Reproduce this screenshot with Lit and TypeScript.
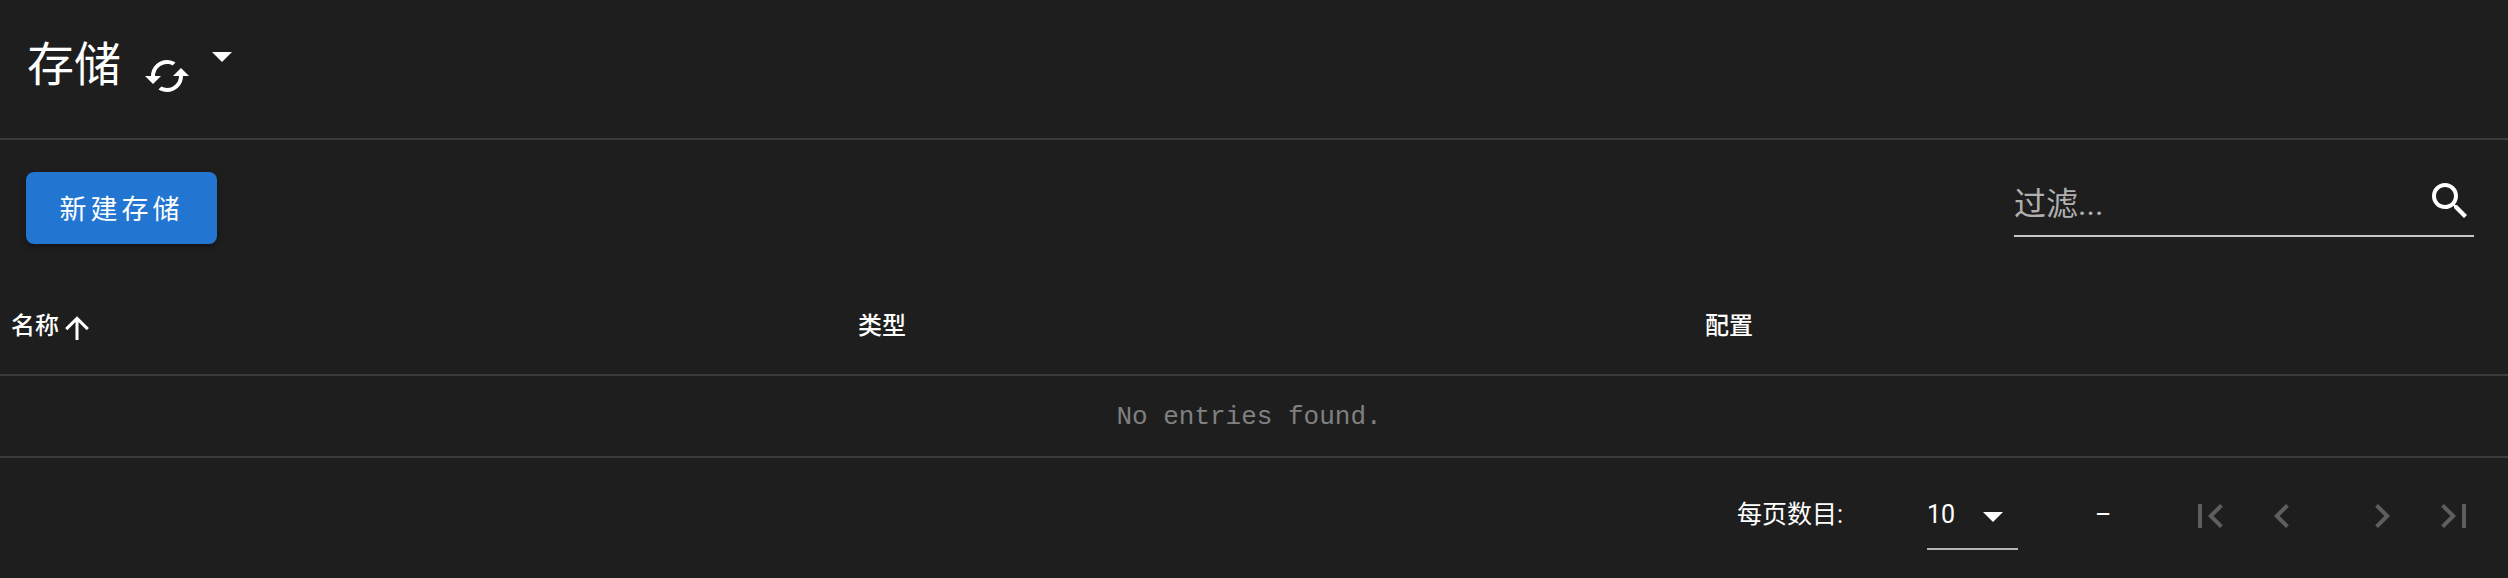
import { LitElement, html, css, svg } from 'lit';
import { customElement } from 'lit/decorators.js';

const SYNC =
  'M12,18A6,6 0 0,1 6,12C6,11 6.25,10.03 6.7,9.2L5.24,7.74C4.46,8.97 4,10.43 4,12A8,8 0 0,0 12,20V23L16,19L12,15M12,4V1L8,5L12,9V6A6,6 0 0,1 18,12C18,13 17.75,13.97 17.3,14.8L18.76,16.26C19.54,15.03 20,13.57 20,12A8,8 0 0,0 12,4Z';
const SEARCH =
  'M9.5,3A6.5,6.5 0 0,1 16,9.5C16,11.11 15.41,12.59 14.44,13.73L14.71,14H15.5L20.5,19L19,20.5L14,15.5V14.71L13.73,14.44C12.59,15.41 11.11,16 9.5,16A6.5,6.5 0 0,1 3,9.5A6.5,6.5 0 0,1 9.5,3M9.5,5C7,5 5,7 5,9.5C5,12 7,14 9.5,14C12,14 14,12 14,9.5C14,7 12,5 9.5,5Z';
const ARROW_UP = 'M13,20H11V8L5.5,13.5L4.08,12.08L12,4.16L19.92,12.08L18.5,13.5L13,8V20Z';
const FIRST = 'M18.41,16.59L13.82,12L18.41,7.41L17,6L11,12L17,18L18.41,16.59M6,6H8V18H6V6Z';
const PREV = 'M15.41,16.58L10.83,12L15.41,7.41L14,6L8,12L14,18L15.41,16.58Z';
const NEXT = 'M8.59,16.58L13.17,12L8.59,7.41L10,6L16,12L10,18L8.59,16.58Z';
const LAST = 'M5.59,7.41L10.18,12L5.59,16.59L7,18L13,12L7,6L5.59,7.41M16,6H18V18H16V6Z';
const CARET = 'M7,10L12,15L17,10H7Z';

const icon = (d: string, cls = '') =>
  html`<svg class="icon ${cls}" viewBox="0 0 24 24">${svg`<path d=${d}></path>`}</svg>`;

@customElement('app-root')
export class AppRoot extends LitElement {
  render() {
    return html`
      <header class="title-bar">
        <h1 class="title">存储</h1>
        ${icon(SYNC, 'sync')} ${icon(CARET, 'title-caret')}
      </header>

      <section class="toolbar">
        <button class="primary">新建存储</button>
        <label class="filter">
          <span class="filter__text">过滤...</span>
          ${icon(SEARCH, 'search')}
        </label>
      </section>

      <div class="row head">
        <div class="cell">名称 ${icon(ARROW_UP, 'sort')}</div>
        <div class="cell">类型</div>
        <div class="cell">配置</div>
      </div>
      <div class="empty">No entries found.</div>

      <footer class="pager">
        <span class="pager__label">每页数目:</span>
        <div class="pager__select">
          <span>10</span>
          ${icon(CARET, 'pager-caret')}
        </div>
        <span class="pager__range">–</span>
        <div class="pager__nav">
          ${icon(FIRST, 'nav')} ${icon(PREV, 'nav')} ${icon(NEXT, 'nav gap')} ${icon(LAST, 'nav')}
        </div>
      </footer>
    `;
  }

  static styles = css`
    :host {
      display: block;
      width: 2508px;
      height: 578px;
      overflow: hidden;
      background: #1e1e1e;
      color: #fff;
      font-family: Roboto, 'Noto Sans CJK SC', sans-serif;
    }

    .icon {
      display: block;
      fill: currentColor;
      flex: none;
    }

    .title-bar {
      box-sizing: border-box;
      height: 140px;
      border-bottom: 2px solid #3b3b3b;
      display: flex;
      align-items: flex-start;
      padding-left: 27px;
    }

    .title {
      width: 96px;
      margin: 33px 0 0;
      font-size: 47px;
      font-weight: 400;
      line-height: 64px;
    }

    .sync {
      width: 48px;
      height: 48px;
      margin: 52px 0 0 20px;
      transform: rotate(90deg);
    }

    .title-caret {
      width: 48px;
      height: 48px;
      margin: 32px 0 0 7px;
    }

    .toolbar {
      box-sizing: border-box;
      height: 136px;
      padding: 32px 34px 0 26px;
      display: flex;
      justify-content: space-between;
      align-items: flex-start;
    }

    .primary {
      width: 191px;
      height: 72px;
      padding: 0 0 2px;
      border: 0;
      border-radius: 8px;
      background: #2276d2;
      color: #fff;
      font: 400 27px Roboto, 'Noto Sans CJK SC', sans-serif;
      letter-spacing: 4px;
      box-shadow: 0 3px 6px rgba(0, 0, 0, 0.35);
    }

    .filter {
      box-sizing: border-box;
      width: 460px;
      height: 65px;
      padding-bottom: 6px;
      border-bottom: 2px solid #c8c8c8;
      display: flex;
      justify-content: space-between;
      align-items: center;
      color: #b0b0b0;
      font-size: 32px;
    }

    .search {
      width: 48px;
      height: 48px;
      color: #fff;
    }

    .row {
      display: grid;
      grid-template-columns: 847px 847px 1fr;
      padding-left: 11px;
    }

    .head {
      box-sizing: border-box;
      height: 100px;
      border-bottom: 2px solid #3b3b3b;
      align-items: center;
      font-size: 24px;
      font-weight: 500;
    }

    .cell {
      display: flex;
      align-items: center;
      gap: 0;
      margin-top: -3px;
    }

    .sort {
      width: 36px;
      height: 36px;
      margin-top: 8px;
    }

    .empty {
      box-sizing: border-box;
      height: 82px;
      padding: 2px 10px 0 0;
      border-bottom: 2px solid #3b3b3b;
      display: flex;
      align-items: center;
      justify-content: center;
      font-family: 'Liberation Mono', monospace;
      font-size: 26px;
      color: #808080;
    }

    .pager {
      height: 120px;
      display: flex;
      align-items: flex-start;
      font-size: 25px;
      padding-left: 1737px;
    }

    .pager__label {
      width: 190px;
      margin-top: 42px;
      line-height: 30px;
    }

    .pager__select {
      box-sizing: border-box;
      width: 91px;
      height: 92px;
      border-bottom: 2px solid #b4b4b4;
      display: flex;
      align-items: flex-start;
      gap: 14px;
      padding-top: 42px;
      line-height: 30px;
    }

    .pager-caret {
      width: 48px;
      height: 48px;
      margin-top: -8px;
    }

    .pager__range {
      width: 91px;
      margin: 42px 0 0 77px;
      line-height: 30px;
    }

    .pager__nav {
      display: flex;
      gap: 24px;
      margin-top: 34px;
      color: #5e5e5e;
    }

    .nav {
      width: 48px;
      height: 48px;
    }

    .gap {
      margin-left: 28px;
    }
  `;
}

declare global {
  interface HTMLElementTagNameMap {
    'app-root': AppRoot;
  }
}
